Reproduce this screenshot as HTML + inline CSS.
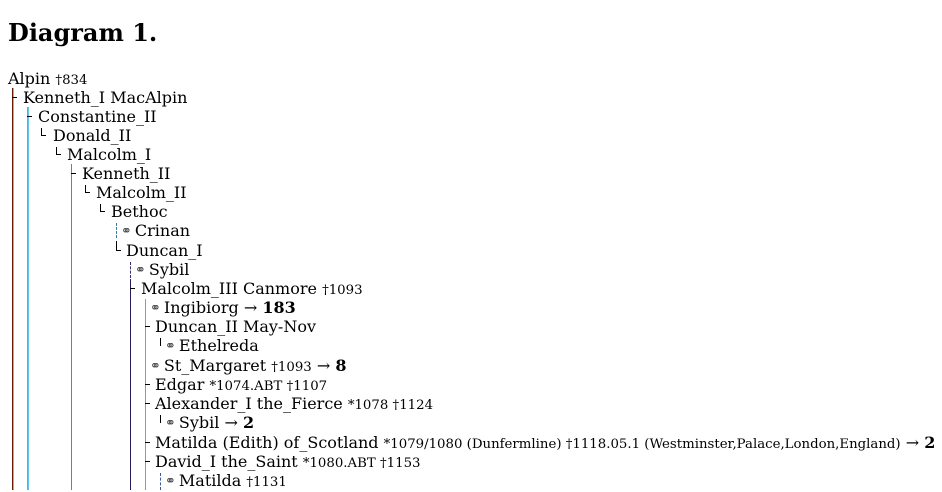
<!DOCTYPE html>
<html><head><meta charset="utf-8"><style>
body{margin:0;width:942px;height:490px;overflow:hidden;background:#fff;font-family:"DejaVu Serif","Liberation Serif",serif;color:#000;position:relative}
h1{position:absolute;left:8px;top:17px;margin:0;font-size:24px;font-weight:bold;line-height:32px}
.r{position:absolute;font-size:16px;line-height:19px;white-space:nowrap}
.s{font-size:13.3px}
b{font-weight:bold}
.v{position:absolute;width:1px}
.t{position:absolute;width:1px;height:12px;background:#000}
.h{position:absolute;height:1px;width:5px;background:#000}
.d{position:absolute;width:0;height:13px;border-left:1px dashed #000}
.m{font-size:13px;color:#444;margin-right:3px;position:relative;top:-1px;font-family:"DejaVu Sans",sans-serif}
</style></head><body>
<h1>Diagram 1.</h1>
<div class="v" style="left:12px;top:88px;height:402px;background:#6a1a00"></div>
<div class="v" style="left:13px;top:88px;height:402px;background:#e8a040"></div>
<div class="v" style="left:27px;top:107px;height:383px;background:#e08a20"></div>
<div class="v" style="left:28px;top:107px;height:383px;background:#60c8f0"></div>
<div class="v" style="left:71px;top:164px;height:326px;background:#c07010"></div>
<div class="v" style="left:130px;top:279px;height:211px;background:#2a1a60"></div>
<div class="v" style="left:145px;top:299px;height:191px;background:#e08a20"></div>

<div class="r" style="left:8px;top:69px">Alpin <span class="s">†834</span></div>
<div class="h" style="left:12px;top:97px"></div>
<div class="r" style="left:23px;top:88px">Kenneth_I MacAlpin</div>
<div class="h" style="left:27px;top:116px"></div>
<div class="r" style="left:38px;top:107px">Constantine_II</div>
<div class="t" style="left:41px;top:128px;height:8px"></div><div class="h" style="left:41px;top:135px"></div>
<div class="r" style="left:53px;top:126px">Donald_II</div>
<div class="t" style="left:56px;top:147px;height:8px"></div><div class="h" style="left:56px;top:154px"></div>
<div class="r" style="left:67px;top:145px">Malcolm_I</div>
<div class="h" style="left:71px;top:173px"></div>
<div class="r" style="left:82px;top:164px">Kenneth_II</div>
<div class="t" style="left:85px;top:185px;height:8px"></div><div class="h" style="left:85px;top:192px"></div>
<div class="r" style="left:96px;top:183px">Malcolm_II</div>
<div class="t" style="left:100px;top:204px;height:8px"></div><div class="h" style="left:100px;top:211px"></div>
<div class="r" style="left:111px;top:202px">Bethoc</div>
<div class="d" style="left:116px;top:223px;height:15px;border-color:#3a7aa0"></div>
<div class="r" style="left:121px;top:221px"><span class="m">⚭</span>Crinan</div>
<div class="t" style="left:116px;top:241px;height:9px"></div><div class="h" style="left:116px;top:250px"></div>
<div class="r" style="left:126px;top:241px">Duncan_I</div>
<div class="d" style="left:130px;top:262px;height:16px;border-color:#3a2a70"></div>
<div class="r" style="left:135px;top:260px"><span class="m">⚭</span>Sybil</div>
<div class="h" style="left:130px;top:288px"></div>
<div class="r" style="left:141px;top:279px">Malcolm_III Canmore <span class="s">†1093</span></div>
<div class="d" style="left:145px;top:300px;height:16px;border-color:#e08a20"></div>
<div class="r" style="left:150px;top:298px"><span class="m">⚭</span>Ingibiorg → <b>183</b></div>
<div class="h" style="left:145px;top:326px"></div>
<div class="r" style="left:155px;top:317px">Duncan_II May-Nov</div>
<div class="t" style="left:160px;top:338px;height:8px"></div>
<div class="r" style="left:165px;top:336px"><span class="m">⚭</span>Ethelreda</div>
<div class="d" style="left:145px;top:358px;height:16px;border-color:#e08a20"></div>
<div class="r" style="left:150px;top:356px"><span class="m">⚭</span>St_Margaret <span class="s">†1093</span> → <b>8</b></div>
<div class="h" style="left:145px;top:384px"></div>
<div class="r" style="left:155px;top:375px">Edgar <span class="s">*1074.ABT †1107</span></div>
<div class="h" style="left:145px;top:403px"></div>
<div class="r" style="left:155px;top:394px">Alexander_I the_Fierce <span class="s">*1078 †1124</span></div>
<div class="t" style="left:160px;top:415px;height:8px"></div>
<div class="r" style="left:165px;top:413px"><span class="m">⚭</span>Sybil → <b>2</b></div>
<div class="h" style="left:145px;top:442px"></div>
<div class="r" style="left:155px;top:433px">Matilda (Edith) of_Scotland <span class="s">*1079/1080 (Dunfermline) †1118.05.1 (Westminster,Palace,London,England)</span> → <b>2</b></div>
<div class="h" style="left:145px;top:461px"></div>
<div class="r" style="left:155px;top:452px">David_I the_Saint <span class="s">*1080.ABT †1153</span></div>
<div class="d" style="left:160px;top:473px;height:17px;border-color:#3a5aa0"></div>
<div class="r" style="left:165px;top:471px"><span class="m">⚭</span>Matilda <span class="s">†1131</span></div>
</body></html>
